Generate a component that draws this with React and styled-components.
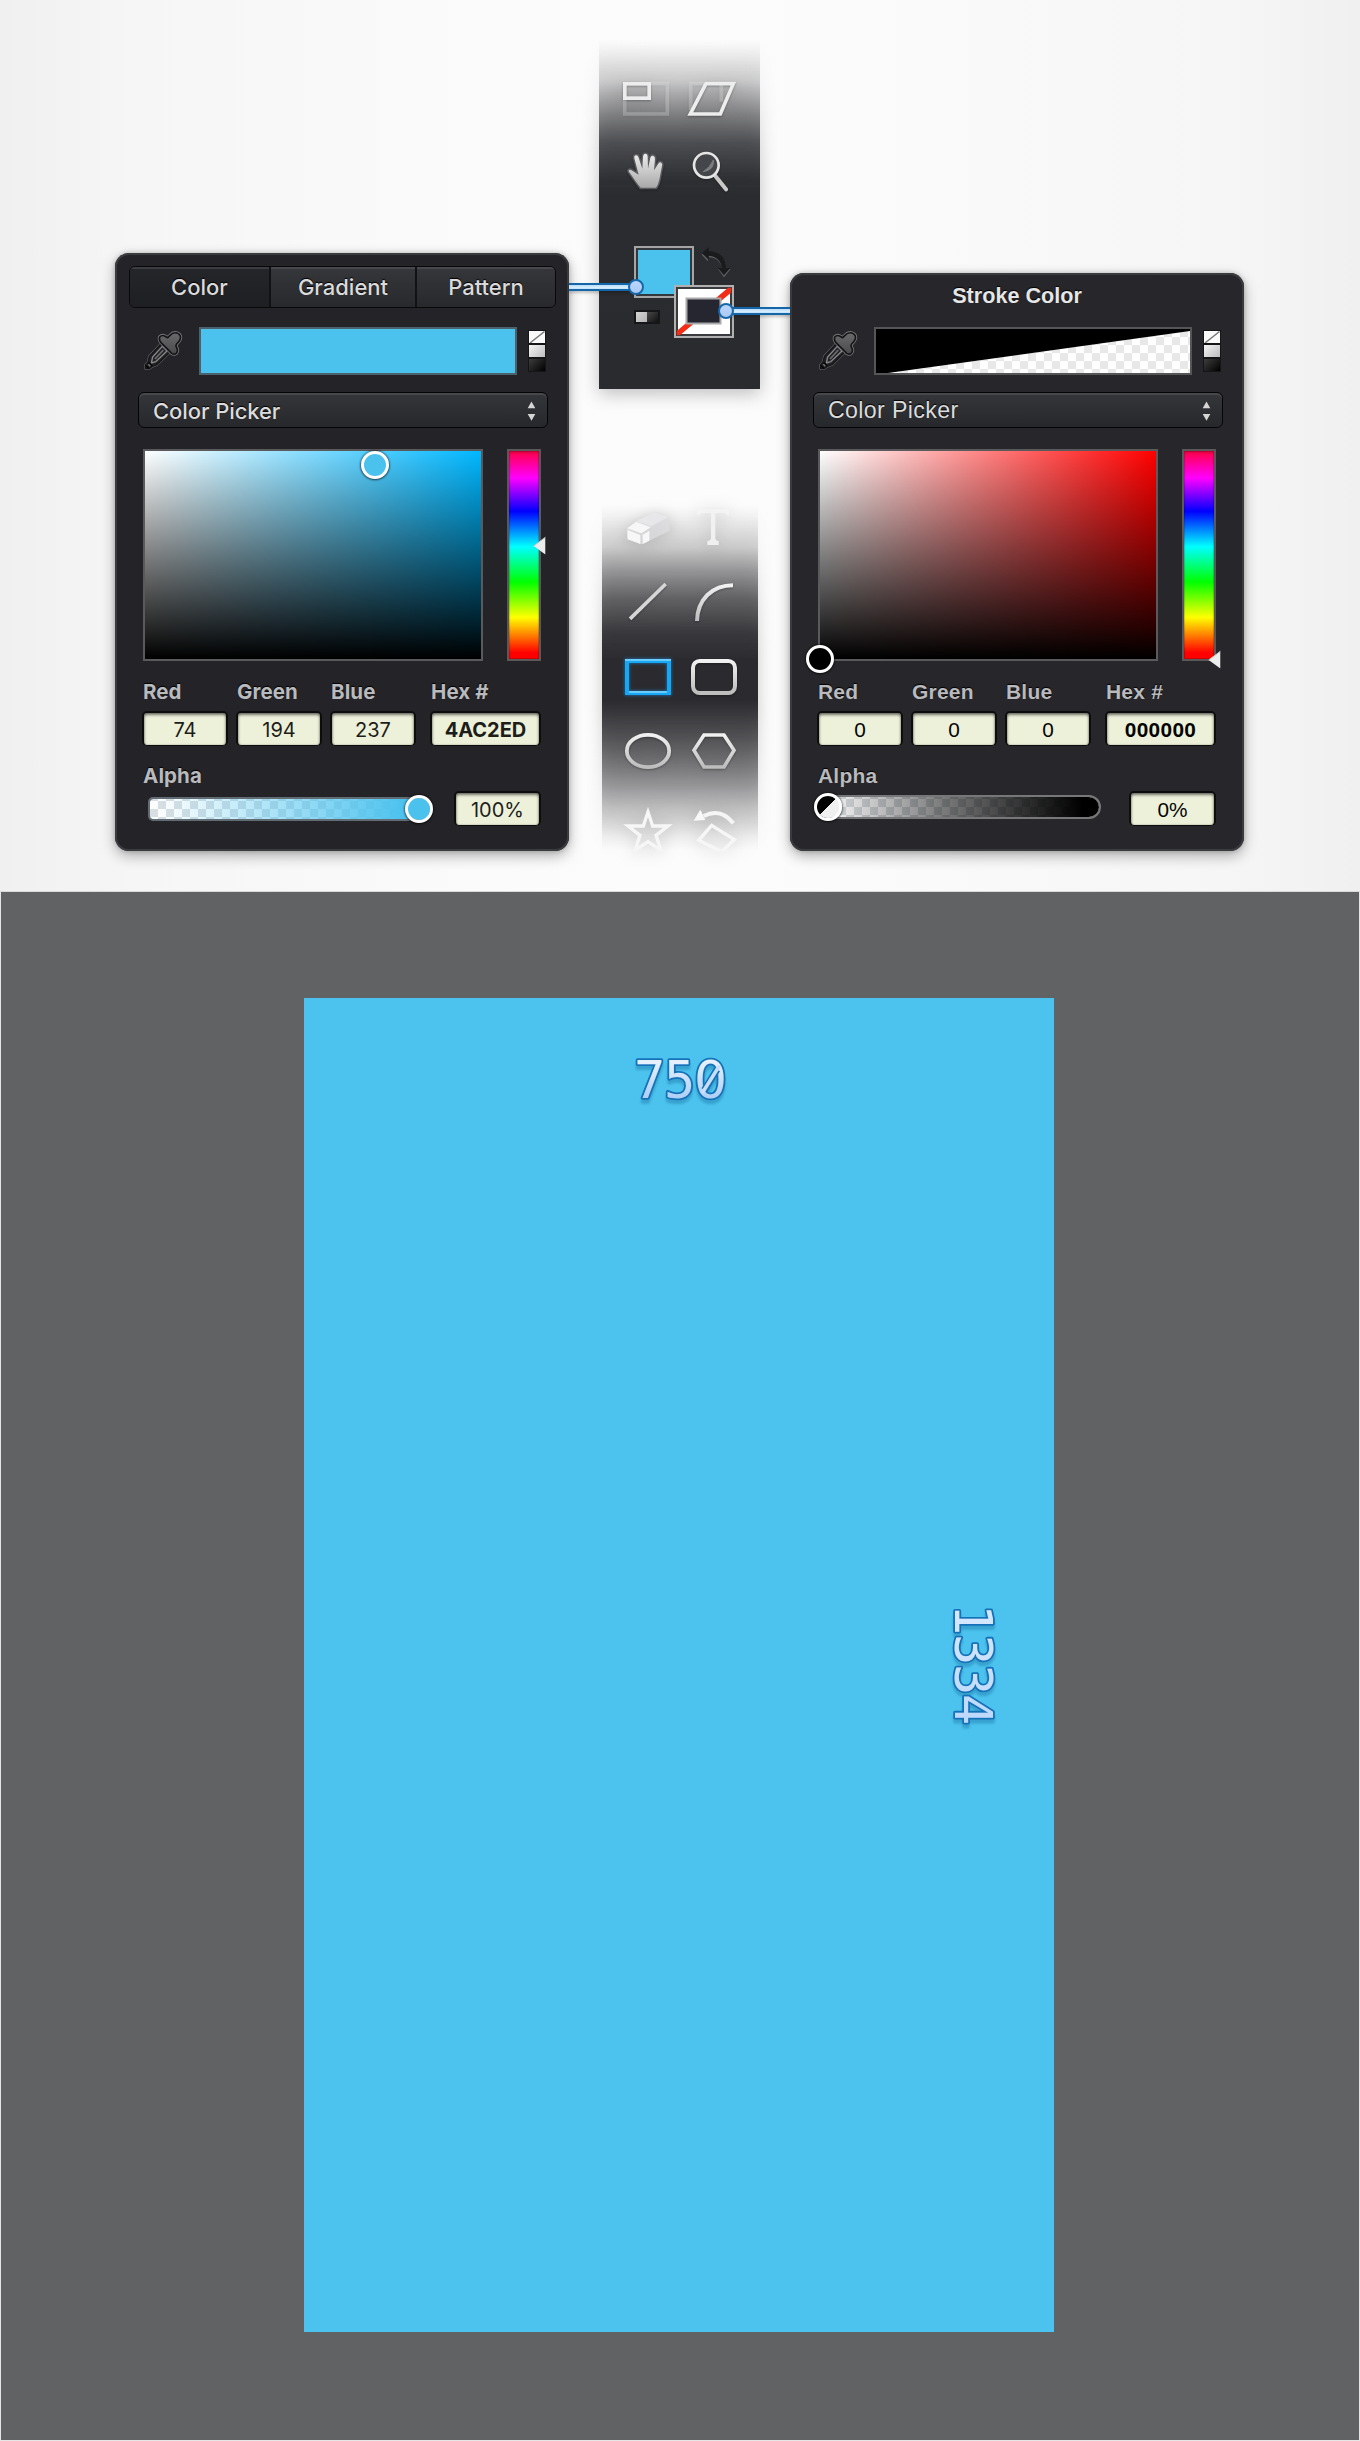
import React from "react";
import styled, { createGlobalStyle } from "styled-components";

const Global = createGlobalStyle`
  *, *::before, *::after { box-sizing: border-box; }
  body { margin: 0; background: #e6e6e6; }
`;

const Page = styled.div`
  width: 1360px;
  height: 2441px;
  display: flex;
  flex-direction: column;
`;

/* ---------- upper stage ---------- */

const Stage = styled.section`
  position: relative;
  height: 892px;
  padding: 40px 116px 0 115px;
  display: flex;
  border-bottom: 1px solid #dadadb;
  background: linear-gradient(90deg, #f0f0f0 0, #f6f6f6 10%, #fbfbfb 36%, #fcfcfc 50%, #fbfbfb 62%, #f6f6f6 90%, #f0f0f0 100%);
`;

const Tools = styled.div`
  width: 221px;
  display: flex;
  flex-direction: column;
`;

const TopStrip = styled.div`
  width: 161px;
  height: 349px;
  margin-left: 30px;
  padding: 39px 0 0 21px;
  background: linear-gradient(180deg,
    rgba(43,44,48,0) 0, rgba(43,44,48,.07) 15px, rgba(43,44,48,.2) 40px, rgba(43,44,48,.52) 73px,
    rgba(43,44,48,.8) 103px, rgba(43,44,48,.98) 140px, #2b2c30 155px, #2a2b2e 100%);
  filter: drop-shadow(0 5px 9px rgba(0,0,0,.24));
`;

const BottomStrip = styled.div`
  width: 156px;
  height: 346px;
  margin: 116px 0 0 33px;
  padding-left: 20px;
  display: grid;
  grid-template-columns: 52px 52px;
  column-gap: 14px;
  row-gap: 30px;
  align-content: start;
  overflow: hidden;
  background: linear-gradient(180deg,
    rgba(43,43,47,0) 0, rgba(43,43,47,.05) 12px, rgba(43,43,47,.2) 42px, rgba(43,43,47,.46) 68px,
    rgba(43,43,47,.7) 95px, rgba(43,43,47,.92) 128px, #2b2b2f 155px, #2b2b2f 195px,
    rgba(43,43,47,.78) 232px, rgba(43,43,47,.53) 268px, rgba(43,43,47,.26) 302px,
    rgba(43,43,47,.05) 333px, rgba(43,43,47,0) 100%);
  filter: drop-shadow(0 2px 8px rgba(0,0,0,.2));
`;

const IconRow = styled.div`
  display: flex;
  gap: ${(p) => p.$gap}px;
  padding-left: ${(p) => p.$inset || 0}px;
  margin-bottom: ${(p) => p.$below || 0}px;
  svg { display: block; filter: drop-shadow(0 1px 1px rgba(0,0,0,.3)); }
`;

const ToolIcon = styled.svg`
  display: block;
  width: 52px;
  height: ${(p) => p.$h || 45}px;
  filter: ${(p) => (p.$flat ? "none" : "drop-shadow(0 1px 1px rgba(0,0,0,.3))")};
`;

const ColorWell = styled.div`
  position: relative;
  width: 110px;
  height: 100px;
  margin-left: 14px;
`;

const FillChip = styled.div`
  width: 60px;
  height: 52px;
  margin-top: 15px;
  border: 2px solid #a5a5a6;
  background: #4bc2ee;
  box-shadow: inset 0 0 0 2px #33383d;
`;

const StrokeChip = styled.svg`
  position: absolute;
  left: 40px;
  top: 39px;
  width: 60px;
  height: 53px;
`;

const SwapArrow = styled.svg`
  position: absolute;
  left: 66px;
  top: 0;
  width: 32px;
  height: 32px;
`;

const DefaultChips = styled.div`
  display: flex;
  width: 26px;
  height: 14px;
  margin-top: 12px;
  padding: 2px;
  background: #151617;
  &::before { content: ""; flex: 1; background: linear-gradient(135deg, #d4d4d4, #b4b4b4); }
  &::after { content: ""; flex: 1; background: linear-gradient(135deg, #4a4a4a, #111); }
`;

/* ---------- connectors ---------- */

const Connector = styled.div`
  position: absolute;
  left: ${(p) => p.$x}px;
  top: ${(p) => p.$y}px;
  width: ${(p) => p.$w}px;
  height: 8px;
  background: linear-gradient(180deg, #1566a8 0 2px, #b9dcfa 2px, #dcf0ff 5px, #b4d8f8 6px, #1566a8 6px 8px);
  box-shadow: 0 2px 3px rgba(0,0,0,.22);
`;

const Dot = styled.i`
  position: absolute;
  top: -4px;
  ${(p) => p.$side}: -8px;
  width: 16px;
  height: 16px;
  border-radius: 50%;
  border: 2px solid #1668ab;
  background: linear-gradient(180deg, #bcd6fa, #a9c9f6);
`;

/* ---------- inspector panels ---------- */

const Panel = styled.div`
  width: 454px;
  height: ${(p) => p.$h}px;
  margin-top: ${(p) => 811 - p.$h}px;
  border-radius: 14px;
  background: ${(p) => p.$bg};
  box-shadow: inset 0 0 0 2px #3a3b3e, 0 5px 14px rgba(0,0,0,.3), 0 0 5px rgba(0,0,0,.2);
  font-family: ${(p) => (p.$classic ? '"Liberation Sans"' : 'Inter')}, sans-serif;
  display: flex;
  flex-direction: column;
`;

const Tabs = styled.div`
  display: grid;
  grid-template-columns: 141px 146px 138px;
  height: 42px;
  margin: 13px 13px 19px 14px;
  border: 1px solid #09090a;
  border-radius: 6px;
  overflow: hidden;
`;

const Tab = styled.div`
  display: flex;
  align-items: center;
  justify-content: center;
  padding-bottom: 1px;
  font-size: 22px;
  font-weight: 500;
  color: #dbdbdc;
  text-shadow: 0 -1px 1px #000;
  border-right: ${(p) => (p.$last ? 0 : 2)}px solid #111214;
  background: ${(p) => (p.$on ? "linear-gradient(#252629, #1e1f22)" : "linear-gradient(#36373b, #28292c)")};
  box-shadow: inset 0 2px 0 ${(p) => (p.$on ? "#3b3c3f" : "#47484b")};
`;

const Title = styled.div`
  margin: 11px 0 19px;
  text-align: center;
  font-size: 21.6px;
  line-height: 24px;
  font-weight: 700;
  color: #e6e6e7;
  text-shadow: 0 -1px 1px #000;
`;

const SwatchRow = styled.div`
  display: flex;
  align-items: flex-start;
  height: 48px;
  margin: 0 23px 17px 28px;
`;

const Dropper = styled.svg`
  width: 40px;
  height: 40px;
  margin: 3px 16px 0 0;
`;

const checker = (a, b, s) => `repeating-conic-gradient(${a} 0 25%, ${b} 0 50%) 0 0 / ${s}px ${s}px`;

const Swatch = styled.div`
  position: relative;
  width: 318px;
  height: 48px;
  border: 2px solid ${(p) => (p.$empty ? "#555558" : "#4b626d")};
  background: ${(p) => (p.$empty ? checker("#ffffff", "#e8e8e8", 16) : "#4bc2ee")};
  &::before {
    content: "";
    display: ${(p) => (p.$empty ? "block" : "none")};
    height: 100%;
    background: #000;
    clip-path: polygon(0 0, 100% 0, 100% 2px, 12px 100%, 0 100%);
  }
`;

const Presets = styled.div`
  display: grid;
  grid-template-rows: repeat(3, 12px);
  gap: 2px;
  width: 18px;
  height: 42px;
  margin: 3px 0 0 11px;
  padding: 1px;
  background: #151517;
  svg { display: block; width: 16px; height: 12px; }
`;

const Preset = styled.span`
  background: ${(p) => (p.$dark ? "linear-gradient(135deg, #3d3d3e, #000)" : "linear-gradient(135deg, #f4f4f4, #bdbdc0)")};
`;

const Select = styled.div`
  display: flex;
  align-items: center;
  justify-content: space-between;
  height: 36px;
  margin: 0 21px 21px 23px;
  padding: 1px 11px 0 14px;
  border: 1px solid #050506;
  border-radius: 6px;
  background: linear-gradient(#35363a, #27282b);
  box-shadow: inset 0 2px 0 #47484b;
  font-size: ${(p) => (p.$classic ? 23.2 : 22)}px;
  font-weight: ${(p) => (p.$classic ? 400 : 500)};
  letter-spacing: ${(p) => (p.$classic ? 0.35 : -0.08)}px;
  color: #dcdcdd;
  text-shadow: 0 -1px 1px #000;
  svg { width: 9px; height: 22px; }
`;

const PickerRow = styled.div`
  display: flex;
  gap: 24px;
  padding-left: 28px;
  height: 212px;
`;

const Field = styled.div`
  position: relative;
  width: 340px;
  border: 2px solid #5a5a5c;
  background: linear-gradient(0deg, #000 0, rgba(0,0,0,.86) 14%, rgba(0,0,0,.5) 50%, rgba(0,0,0,0) 100%),
    linear-gradient(90deg, #fff, ${(p) => p.$hue});
`;

const Hue = styled.div`
  position: relative;
  width: 34px;
  border: 2px solid #5b585b;
  background: linear-gradient(180deg, #e0003c 0, #ff0062 2%, #ff00ff 13%, #0000ff 29%, #00ffff 46%, #00ff00 63%, #ffff00 80%, #ff0000 97%);
  box-shadow: inset 0 0 1px 1px rgba(0,0,0,.2);
`;

const HuePointer = styled.svg`
  position: absolute;
  left: 24px;
  top: ${(p) => p.$y}px;
  width: 13px;
  height: 18px;
  overflow: visible;
`;

const Knob = styled.i`
  position: absolute;
  left: ${(p) => p.$x - 14}px;
  top: ${(p) => p.$y - 14}px;
  width: 28px;
  height: 28px;
  border-radius: 50%;
  border: 3px solid #fff;
  background: ${(p) => p.$fill} padding-box;
  box-shadow: 0 0 2px 1px rgba(0,0,0,.4), 0 1px 2px rgba(0,0,0,.4);
`;

const Channels = styled.div`
  display: grid;
  grid-template-columns: 86px 86px 86px 117px;
  column-gap: 8px;
  margin: 19px 0 0 27px;
`;

const Channel = styled.div`
  margin-left: ${(p) => (p.$wide ? 6 : 0)}px;
`;

const Label = styled.div`
  height: 24px;
  line-height: 24px;
  padding-left: 1px;
  margin-bottom: ${(p) => p.$below || 0}px;
  font-size: ${(p) => (p.$classic ? 21 : 20.5)}px;
  font-weight: 700;
  letter-spacing: ${(p) => (p.$classic ? 0.2 : 0.1)}px;
  color: #b9babd;
  text-shadow: 0 -1px 1px #000;
`;

const AlphaLabel = styled(Label)`
  margin-top: 18px;
  margin-left: 27px;
`;

const Value = styled.div`
  display: flex;
  align-items: center;
  justify-content: center;
  width: ${(p) => p.$w || 86}px;
  height: 35px;
  padding-top: 1px;
  border: solid #0d0d0e;
  border-width: 2px 2px 1px;
  border-radius: 5px;
  background: #edf1da;
  box-shadow: inset 0 2px 3px rgba(0,0,0,.5), inset 0 0 2px rgba(0,0,0,.35);
  font-size: ${(p) => (p.$classic ? 20.8 : 20)}px;
  font-weight: ${(p) => (p.$bold ? 700 : 400)};
  letter-spacing: ${(p) => (p.$classic && p.$bold ? 0.35 : 0)}px;
  color: ${(p) => (p.$classic ? "#050505" : "#1d1e1a")};
`;

const AlphaRow = styled.div`
  display: flex;
  justify-content: space-between;
  align-items: flex-start;
  height: 35px;
  margin: 0 28px 0 ${(p) => p.$left}px;
`;

const Slider = styled.div`
  position: relative;
  width: ${(p) => p.$w}px;
  height: 24px;
  margin-top: ${(p) => p.$drop}px;
  border: 2px solid ${(p) => p.$edge};
  border-radius: ${(p) => p.$r}px;
  background: linear-gradient(90deg, ${(p) => p.$ramp}) padding-box,
    repeating-conic-gradient(#dadfe2 0 25%, #fff 0 50%) 0 2px / 16px 16px padding-box;
`;

/* ---------- lower canvas ---------- */

const Workspace = styled.section`
  flex: 1;
  margin: 0 1px 1px;
  padding: 106px 0 0 303px;
  background: #616264;
`;

const Artboard = styled.div`
  width: 750px;
  height: 1334px;
  display: grid;
  grid-template-columns: 1fr 84px;
  grid-template-rows: 120px 1fr;
  background: #4bc3ee;
`;

const WidthMark = styled.svg`
  width: 110px;
  height: 64px;
  margin: 51px 0 0 321px;
  overflow: visible;
`;

const HeightMark = styled.svg`
  grid-column: 2;
  grid-row: 2;
  width: 64px;
  height: 140px;
  margin: 478px 0 0 -27px;
  overflow: visible;
`;

const Digits = styled.text`
  font-family: "DejaVu Sans Mono", monospace;
  font-size: 52px;
  letter-spacing: -1.3px;
  fill: url(#${(p) => p.$fill});
  stroke: #1672b8;
  stroke-width: 3.6px;
  stroke-linejoin: round;
  paint-order: stroke;
`;

const Cast = styled.g`
  filter: drop-shadow(0 4px 1px rgba(20,100,150,.35));
`;

const RoundDigit = styled.tspan`
  font-family: "DejaVu Sans", sans-serif;
`;

/* ---------- parts ---------- */

function Eyedropper() {
  const tube = "M189 306 L215 332 L172 374 L158 379 L149 386 L138 386 L138 374 L145 366 L149 349 Z";
  const bulb = "M180 291 Q187 284 195 288 L204 293 L211 286 Q220 276 232 279 Q245 284 242 297 Q240 303 231 312 Q227 316 230 321 Q237 331 230 340 Q224 345 216 340 L184 308 Q177 300 180 291 Z";
  return (
    <Dropper viewBox="130 270 120 120">
      <defs>
        <linearGradient id="bulb" x1="0" y1="0" x2="0" y2="1"><stop offset="0" stopColor="#6a6a6d" /><stop offset="1" stopColor="#4a4a4d" /></linearGradient>
      </defs>
      <g strokeLinejoin="round">
        <path d={tube} fill="none" stroke="#6f6f73" strokeWidth="7" />
        <path d={tube} fill="#232226" stroke="#151517" strokeWidth="4" />
        <path d="M188 319 L202 333 L168 365 L155 369 L159 351 Z" fill="none" stroke="#87878a" strokeWidth="4" />
        <path d="M191 330 L166 357" stroke="#6e6e71" strokeWidth="5" />
        <path d="M139 377 L148 386 M147 367 L157 378" stroke="#09090a" strokeWidth="6" />
        <path d="M146 373 L152 379" stroke="#77777a" strokeWidth="4" />
        <path d={bulb} fill="none" stroke="#77777b" strokeWidth="10" />
        <path d={bulb} fill="url(#bulb)" stroke="#141416" strokeWidth="5" />
      </g>
    </Dropper>
  );
}

function PresetStack() {
  return (
    <Presets>
      <svg viewBox="0 0 16 12"><rect width="16" height="12" fill="#fafafa" /><path d="M1 12 L15.5 .5" stroke="#76767a" strokeWidth="1.4" /></svg>
      <Preset />
      <Preset $dark />
    </Presets>
  );
}

function Inspector({ classic, height, bg, header, hue, knob, hueY, values, alpha, slider }) {
  return (
    <Panel $h={height} $bg={bg} $classic={classic}>
      {header}
      <SwatchRow>
        <Eyedropper />
        <Swatch $empty={classic} />
        <PresetStack />
      </SwatchRow>
      <Select $classic={classic}>
        Color Picker
        <svg viewBox="0 0 9 22"><path d="M4.5 1.5 L8.3 8.3 H.7 Z M4.5 20.7 L8.3 14 H.7 Z" fill="#d5d5d6" /></svg>
      </Select>
      <PickerRow>
        <Field $hue={hue}><Knob $x={knob.x} $y={knob.y} $fill={knob.fill} /></Field>
        <Hue>
          <HuePointer $y={hueY} viewBox="0 0 13 18"><path d="M13 1 V18.5 L2 10 Z" fill="#000" opacity=".3" /><path d="M12.3 .3 V17.5 L.6 9 Z" fill="#ececec" /><path d="M12.3 .3 L.6 9" stroke="#c2c2c2" strokeWidth="1" /></HuePointer>
        </Hue>
      </PickerRow>
      <Channels>
        {values.map(([name, value], i) => (
          <Channel key={name} $wide={i === 3}>
            <Label $classic={classic} $below={7}>{name}</Label>
            <Value $classic={classic} $bold={i === 3} $w={i === 3 ? 111 : 86}>{value}</Value>
          </Channel>
        ))}
      </Channels>
      <AlphaLabel $classic={classic} $below={3}>Alpha</AlphaLabel>
      <AlphaRow $left={slider.left}>
        <Slider $w={slider.w} $drop={slider.drop} $edge={slider.edge} $r={slider.r} $ramp={slider.ramp}>
          <Knob $x={slider.knob} $y={10} $fill={slider.fill} />
        </Slider>
        <Value $classic={classic} $w={87}>{alpha}</Value>
      </AlphaRow>
    </Panel>
  );
}

const HAND = "M146 424 Q146 417 153 420 L176 434 L163 385 Q162 376 168 376 Q174 376 176 383 L187 416 L189 380 Q190 371 196 371 Q203 371 203 380 L204 416 L211 383 Q213 376 219 377 Q226 379 225 387 L222 421 L236 400 Q240 394 244 398 Q248 402 246 408 L238 449 Q234 466 228 473 H182 Q176 466 168 455 Z";

function TopTools() {
  return (
    <TopStrip>
      <IconRow $gap={13} $below={30}>
        <svg width="52" height="40" viewBox="120 147 156 120">
          <path d="M213 161 H262 V252 H134 V210" fill="none" stroke="#fff" strokeOpacity=".25" strokeWidth="11" />
          <rect x="134.500" y="161.500" width="73" height="43" fill="none" stroke="#ededed" strokeWidth="11" />
        </svg>
        <svg width="55" height="40" viewBox="315 147 165 120">
          <path d="M372 161 H332 V240 M424 165 V215" fill="none" stroke="#fff" strokeOpacity=".25" strokeWidth="11" />
          <path d="M378 161 H460 L421 252 H331 Z" fill="none" stroke="#ededed" strokeWidth="11" />
        </svg>
      </IconRow>
      <IconRow $gap={22} $inset={4} $below={53}>
        <svg width="44" height="44" viewBox="132 357 132 132">
          <defs><linearGradient id="hand" x1="0" y1="0" x2="0" y2="1"><stop offset="0" stopColor="#ececec" /><stop offset="1" stopColor="#a9a9aa" /></linearGradient></defs>
          <path d={HAND} fill="#5a5b5e" stroke="#5a5b5e" strokeWidth="9" strokeLinejoin="round" />
          <path d={HAND} fill="url(#hand)" />
        </svg>
        <svg width="41" height="44" viewBox="330 357 123 132">
          <path d="M403 434 L438 478" stroke="#c9c9ca" strokeWidth="12" strokeLinecap="round" />
          <circle cx="379" cy="406" r="37" fill="#45464a" stroke="#e6e6e7" strokeWidth="8" />
          <path d="M400 390 Q404 420 370 425 Q390 413 400 390 Z" fill="#7c7d80" stroke="#7c7d80" strokeWidth="3" />
        </svg>
      </IconRow>
      <ColorWell>
        <SwapArrow viewBox="420 46 96 96">
          <path d="M446 70 Q490 72 493 116" fill="none" stroke="#606164" strokeWidth="14" transform="translate(0 3)" />
          <path d="M425 70 L444 53 V90 Z M474 113 H512 L492 138 Z" fill="#606164" transform="translate(0 2)" />
          <path d="M443 68 Q490 70 492 115" fill="none" stroke="#1a1b1d" strokeWidth="14" />
          <path d="M426 68 L446 50 V87 Z M473 112 H511 L492 134 Z" fill="#1a1b1d" />
        </SwapArrow>
        <FillChip />
        <DefaultChips />
        <StrokeChip viewBox="0 0 60 53">
          <rect x="1" y="1" width="58" height="51" fill="#fff" stroke="#b0b0b1" strokeWidth="2" />
          <rect x="3" y="3" width="54" height="47" fill="#fff" stroke="#3a3b3e" strokeWidth="2" />
          <path d="M4 49 V46.500 L54.500 4 H56 V7 L5.500 49 Z" stroke="#f22d16" strokeWidth="2.500" fill="#f22d16" />
          <rect x="12.500" y="13.500" width="34" height="25" fill="#25262f" stroke="#a9a9ab" strokeWidth="2" />
        </StrokeChip>
      </ColorWell>
    </TopStrip>
  );
}

function ShapeTools() {
  const ink = "url(#metal)";
  return (
    <BottomStrip>
      <ToolIcon $flat viewBox="96 45 156 135">
        <defs>
          <linearGradient id="metal" x1="0" y1="0" x2="0" y2="1"><stop offset="0" stopColor="#f1f1f1" /><stop offset="1" stopColor="#bdbdbe" /></linearGradient>
          <filter id="glow" x="-20%" y="-20%" width="140%" height="140%"><feGaussianBlur stdDeviation="4" /></filter>
        </defs>
        <path d="M110 114 L112 146 L155 163 L238 123 V79 L195 65 Z" fill="#dedee0" opacity=".75" />
        <path d="M138 93 L195 67 L236 80 L184 109 Z" fill="#eaeaeb" opacity=".8" />
        <path d="M112 115 L138 95 L182 112 L154 130 Z M112 120 L151 135 V162 L113 148 Z M158 134 L178 123 V152 L158 162 Z" fill="#f7f7f7" />
      </ToolIcon>
      <ToolIcon $flat viewBox="294 45 156 135">
        <path d="M322 57 H418 V76 H412 Q409 70 403 69 H376 V146 Q377 151 386 154 V165 H352 V154 Q362 151 363 146 V69 H336 Q329 70 326 76 H322 Z" fill="#f3f3f4" opacity=".9" />
      </ToolIcon>
      <ToolIcon viewBox="96 270 156 135">
        <path d="M120 386.500 L227 282" stroke="#d6d6d7" strokeWidth="11" />
      </ToolIcon>
      <ToolIcon viewBox="294 270 156 135">
        <path d="M321 393 Q322 345 352 315 Q383 286 429 286" fill="none" stroke={ink} strokeWidth="12" />
      </ToolIcon>
      <ToolIcon $flat viewBox="96 495 156 135">
        <rect x="111" y="513" width="126" height="96" fill="none" stroke="#1587dc" strokeWidth="14" filter="url(#glow)" opacity=".7" />
        <rect x="111" y="513" width="126" height="96" fill="none" stroke="#16a8f5" strokeWidth="12" />
        <path d="M105 510 H243 M117 606 H231" stroke="#6bcbfa" strokeWidth="6" />
      </ToolIcon>
      <ToolIcon viewBox="294 495 156 135">
        <rect x="309" y="513" width="126" height="96" rx="20" fill="none" stroke={ink} strokeWidth="12" />
      </ToolIcon>
      <ToolIcon viewBox="96 720 156 135">
        <ellipse cx="174" cy="783" rx="63.500" ry="48.500" fill="none" stroke={ink} strokeWidth="11.500" />
      </ToolIcon>
      <ToolIcon viewBox="294 720 156 135">
        <path d="M312 781 L342 735 H402 L432 781 L402 831 H342 Z" fill="none" stroke={ink} strokeWidth="11" />
      </ToolIcon>
      <ToolIcon $flat $h={46} viewBox="96 930 156 138">
        <path d="M174 951 L188 993 H234 L198 1021 L213 1066 L174 1040 L135 1066 L150 1021 L114 993 L160 993 Z" fill="none" stroke="#f6f6f6" strokeWidth="10" />
      </ToolIcon>
      <ToolIcon $flat $h={46} viewBox="294 930 156 138">
        <path d="M341 963 Q393 937 430 985" fill="none" stroke="#f5f5f5" strokeWidth="12" />
        <path d="M311 977 L331 944 L346 975 Z" fill="#f8f8f8" />
        <path d="M326 1036 L365 991 L433 1034 L395 1070 Z" fill="none" stroke="#f6f6f6" strokeWidth="10" />
      </ToolIcon>
    </BottomStrip>
  );
}

export default function App() {
  return (
    <Page>
      <Global />
      <Stage>
        <Inspector
          height={598}
          bg="#242327"
          header={
            <Tabs>
              <Tab $on>Color</Tab>
              <Tab>Gradient</Tab>
              <Tab $last>Pattern</Tab>
            </Tabs>
          }
          hue="#00b7ff"
          knob={{ x: 230, y: 14, fill: "#4bc2ee" }}
          hueY={86}
          values={[["Red", "74"], ["Green", "194"], ["Blue", "237"], ["Hex #", "4AC2ED"]]}
          alpha="100%"
          slider={{ left: 33, w: 282, drop: 6, edge: "rgba(125,140,150,.7)", r: 5, knob: 269, fill: "#4bc2ee", ramp: "rgba(75,194,238,0) 0, rgba(75,194,238,.06) 8%, rgba(75,194,238,.5) 48%, #4bc2ee 92%" }}
        />
        <Tools>
          <TopTools />
          <ShapeTools />
        </Tools>
        <Inspector
          classic
          height={578}
          bg="#27262a"
          header={<Title>Stroke Color</Title>}
          hue="#ff0000"
          knob={{ x: 0, y: 208, fill: "#000" }}
          hueY={200}
          values={[["Red", "0"], ["Green", "0"], ["Blue", "0"], ["Hex #", "000000"]]}
          alpha="0%"
          slider={{ left: 30, w: 281, drop: 4, edge: "#77777a", r: 12, knob: 6, fill: "linear-gradient(135deg, #000 50%, #f0f0f0 50%)", ramp: "rgba(0,0,0,0) 0, rgba(0,0,0,.5) 42%, rgba(0,0,0,.78) 70%, #000 94%" }}
        />
        <Connector $x={569} $y={283} $w={67}><Dot $side="right" /></Connector>
        <Connector $x={726} $y={307} $w={64}><Dot $side="left" /></Connector>
      </Stage>
      <Workspace>
        <Artboard>
          <WidthMark viewBox="0 0 110 64">
            <defs>
              <linearGradient id="glass" x1="0" y1="0" x2="0" y2="1"><stop offset=".2" stopColor="#e6f1ff" /><stop offset=".8" stopColor="#aecff6" /></linearGradient>
              <linearGradient id="glassTurned" x1="0" y1="0" x2="1" y2="0"><stop offset="0" stopColor="#d8e9ff" /><stop offset="1" stopColor="#bcd8fb" /></linearGradient>
            </defs>
            <Cast>
              <Digits $fill="glass" x="9" y="49">75<RoundDigit>0</RoundDigit></Digits>
              <path d="M79.500 41 L92 20.500" stroke="#1672b8" strokeWidth="7" />
              <path d="M77 44.500 L94.500 16.500" stroke="#c9defa" strokeWidth="3.600" />
            </Cast>
          </WidthMark>
          <HeightMark viewBox="0 0 64 140">
            <Cast>
              <g transform="translate(12 8) rotate(90)">
                <Digits $fill="glassTurned" x="0" y="0">1334</Digits>
              </g>
            </Cast>
          </HeightMark>
        </Artboard>
      </Workspace>
    </Page>
  );
}
